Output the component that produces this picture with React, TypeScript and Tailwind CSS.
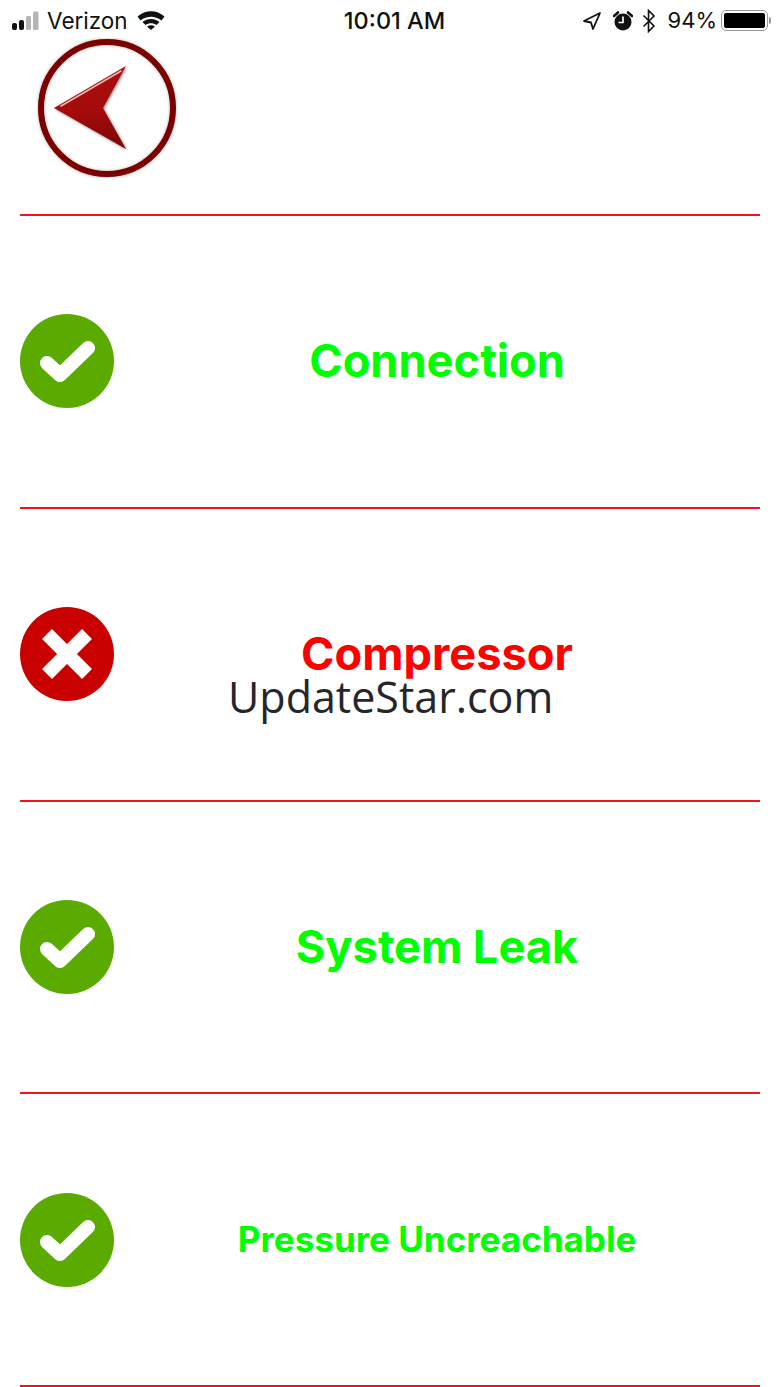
import React from "react";

const rows = [
  { label: "Connection", ok: true, size: "text-[45.2px]" },
  { label: "Compressor", ok: false, size: "text-[45.2px]" },
  { label: "System Leak", ok: true, size: "text-[45.2px]" },
  { label: "Pressure Uncreachable", ok: true, size: "text-[35px]" },
];

const StatusBar = () => (
  <div className="h-[40px] pl-[11px] pr-[9px] pt-[1px] flex items-center justify-between text-[#111]">
    <div className="w-[250px] flex items-center">
      <svg width="32" height="20" viewBox="0 0 32 20" className="mr-[5px]">
        <rect x="1" y="12" width="5" height="7" rx="2" fill="#111" />
        <rect x="8" y="9" width="5" height="10" rx="2" fill="#111" />
        <rect x="15" y="5" width="5" height="14" rx="1.5" fill="#b5b5b5" />
        <rect x="22" y="0.5" width="5.5" height="18.5" rx="1.5" fill="#b5b5b5" />
      </svg>
      <span className="font-['Inter',sans-serif] text-[22.5px] -ml-[1px]">Verizon</span>
      <svg width="28" height="20" viewBox="0 0 28 20" className="ml-[9px] -mt-[2px]">
        <path d="M0.500 6.500C8.500 -0.500 19.500 -0.500 27.500 6.500L24.500 10.500C18 5.500 10 5.500 3.500 10.500Z" fill="#111" />
        <path d="M5.500 12C10.500 8 17.500 8 22.500 12L19.500 15C16 12.800 12 12.800 8.500 15Z" fill="#111" />
        <path d="M10 16.500C12.500 14.800 15.500 14.800 18 16.500L14 20Z" fill="#111" />
      </svg>
    </div>
    <span className="font-['Inter',sans-serif] font-medium text-[23.5px] ml-[7px]">10:01 AM</span>
    <div className="w-[250px] flex items-center justify-end">
      <svg width="20" height="20" viewBox="0 0 20 20" fill="none" stroke="#111" strokeWidth="1.8" className="mr-[11px]">
        <path d="M18 2 2 10l7 1.5L11 18Z" strokeLinejoin="round" />
      </svg>
      <svg width="20" height="22" viewBox="0 0 20 22" className="mr-[9px]">
        <circle cx="10" cy="12" r="8.5" fill="#111" />
        <path d="M10 6.500V12.500H5.500" fill="none" stroke="#fff" strokeWidth="1.7" />
        <path d="M1 6 5 2.500M19 6 15 2.500" stroke="#111" strokeWidth="2.600" strokeLinecap="round" />
      </svg>
      <svg width="14" height="24" viewBox="0 0 14 24" fill="none" stroke="#111" strokeWidth="1.6" className="mr-[12px]">
        <path d="M1.500 6.500 12 17l-5.500 5.500v-21L12 7 1.500 17.500" />
      </svg>
      <span className="font-['Inter',sans-serif] text-[22px] mr-[4px]">94%</span>
      <div className="w-[47px] h-[21px] rounded-[5px] border-[1.5px] border-[#999] p-[2px]">
        <div className="w-full h-full bg-black rounded-[2px]" />
      </div>
      <div className="w-[2px] h-[7px] bg-[#999] rounded-r-[2px] ml-[1px]" />
    </div>
  </div>
);

const BackIcon = () => (
  <svg width="140" height="140" viewBox="0 0 140 140" className="block">
    <defs>
      <linearGradient id="arrowFill" x1="0" y1="0" x2="0" y2="1">
        <stop offset="0" stopColor="#a80f0f" />
        <stop offset="0.55" stopColor="#a50b0b" />
        <stop offset="1" stopColor="#7c0505" />
      </linearGradient>
      <filter id="blurShadow" x="-20%" y="-20%" width="140%" height="140%">
        <feGaussianBlur stdDeviation="1.5" />
      </filter>
      <filter id="blurSoft" x="-20%" y="-20%" width="140%" height="140%">
        <feGaussianBlur stdDeviation="0.7" />
      </filter>
    </defs>
    <circle cx="70" cy="70" r="66" fill="none" stroke="#8a8a8a" strokeWidth="7" filter="url(#blurShadow)" opacity="0.5" />
    <circle cx="70" cy="70" r="66" fill="none" stroke="#7d0606" strokeWidth="6" filter="url(#blurSoft)" />
    <path d="M17 70 89 28 66 70 89 111Z" fill="#555" filter="url(#blurShadow)" transform="translate(1 1)" opacity="0.7" />
    <path d="M17 70 89 28 66 70 89 111Z" fill="url(#arrowFill)" />
    <path d="M24 68 84 33" fill="none" stroke="#f2b3b3" strokeWidth="1.600" strokeLinecap="round" filter="url(#blurSoft)" />
  </svg>
);

const StatusIcon = ({ ok }: { ok: boolean }) => (
  <svg width="94" height="94" viewBox="0 0 94 94" className="block shrink-0">
    <circle cx="47" cy="47" r="47" fill={ok ? "#5aaa00" : "#c80000"} />
    {ok ? (
      <path d="M27 49 40 61 68 34" fill="none" stroke="#fff" strokeWidth="14" strokeLinecap="round" strokeLinejoin="round" />
    ) : (
      <path d="M27 27 67 67M67 27 27 67" fill="none" stroke="#fff" strokeWidth="14" />
    )}
  </svg>
);

export default function App() {
  return (
    <div className="relative w-[780px] h-[1387px] bg-white overflow-hidden">
      <StatusBar />
      <div className="mx-5 h-[178px] border-b-2 border-[#f5101c]">
        <div className="ml-[17px] -mt-[2px]">
          <BackIcon />
        </div>
      </div>
      {rows.map((row) => (
        <div key={row.label} className="mx-5 h-[292.75px] border-b-2 border-[#f5101c] flex items-center">
          <StatusIcon ok={row.ok} />
          <div
            className={`flex-1 text-center font-['Inter',sans-serif] font-bold ${row.size} ${
              row.ok ? "text-[#00ff00]" : "text-[#ff0000]"
            }`}
          >
            {row.label}
          </div>
        </div>
      ))}
      {/* watermark */}
      <div className="absolute left-[228px] top-[666px] text-[43px] leading-[62px] text-[#26262a] font-['Open_Sans',sans-serif]">
        UpdateStar.com
      </div>
    </div>
  );
}
